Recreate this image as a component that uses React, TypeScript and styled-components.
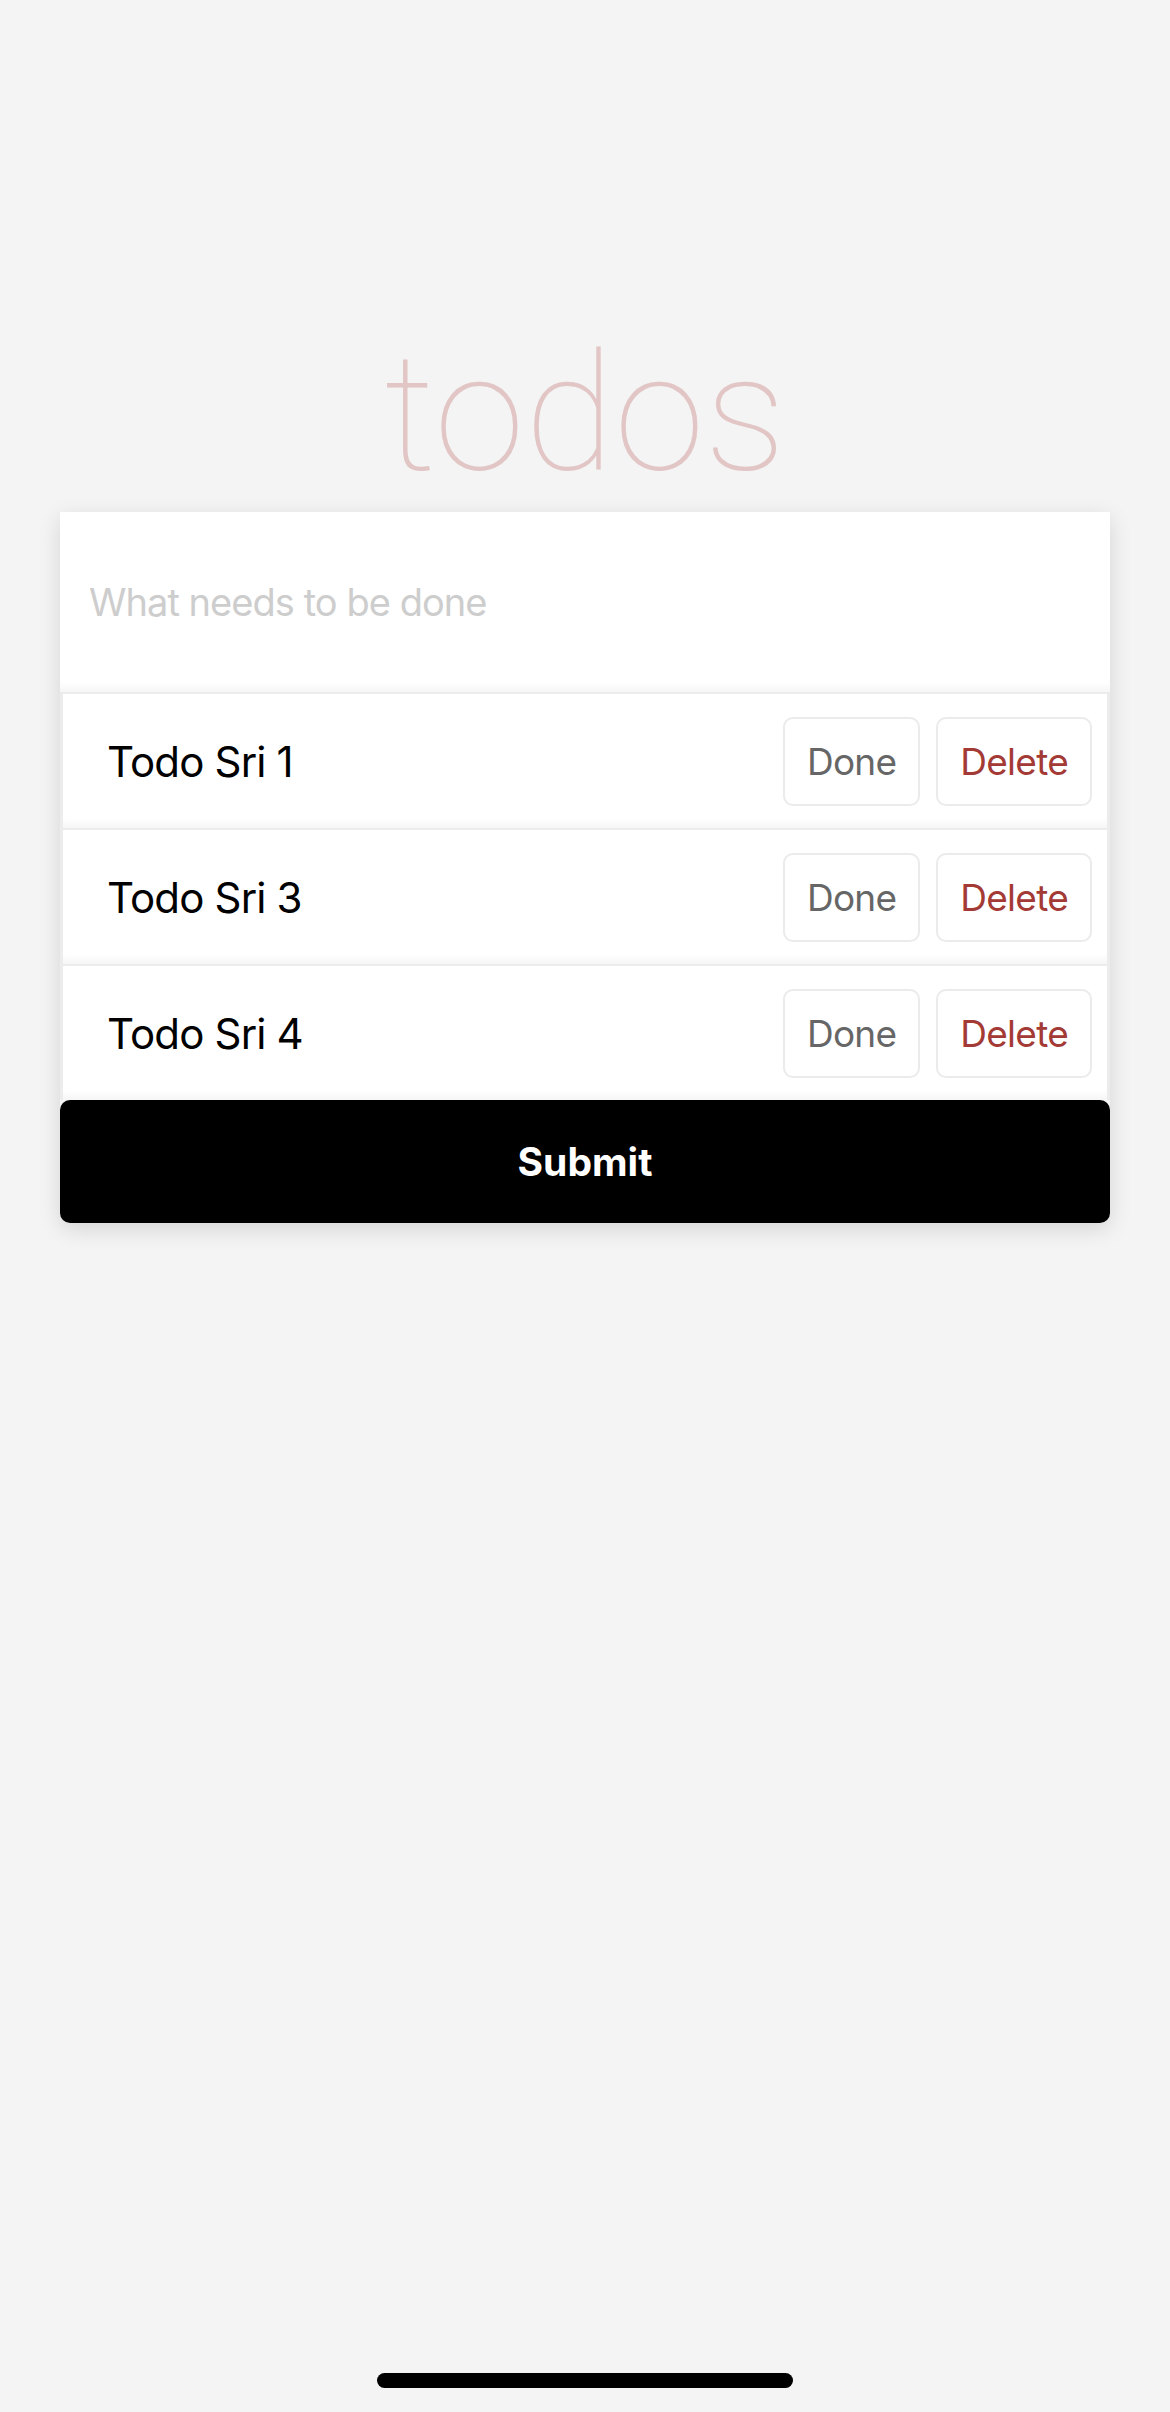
import React from "react";
import styled, { createGlobalStyle } from "styled-components";

const Global = createGlobalStyle`
  html, body { margin: 0; padding: 0; background: #f4f4f4; }
  * { box-sizing: border-box; }
`;

const Screen = styled.div`
  min-height: 2412px;
  display: flex;
  flex-direction: column;
  align-items: stretch;
  background: #f4f4f4;
  font-family: Inter, "Liberation Sans", sans-serif;
`;

const Main = styled.main`
  padding: 331px 60px 0;
  display: flex;
  flex-direction: column;
`;

const Title = styled.h1`
  margin: 0 0 17px;
  text-align: center;
  font-family: Roboto, "Liberation Sans", sans-serif;
  font-weight: 100;
  font-size: 164px;
  line-height: 164px;
  color: #e2c6c6;
`;

const Card = styled.section`
  display: flex;
  flex-direction: column;
  border-radius: 0 0 10px 10px;
  box-shadow: 0 6px 22px rgba(0, 0, 0, 0.13);
`;

const NewTodo = styled.input`
  height: 180px;
  width: 100%;
  border: none;
  outline: none;
  background: #fff;
  padding: 0 27px 0 29px;
  font-family: Inter, "Liberation Sans", sans-serif;
  font-size: 38px;
  letter-spacing: -0.025em;
  color: #111;
  box-shadow: inset 0 -14px 12px -12px rgba(0, 0, 0, 0.06);
  &::placeholder { color: #cdcdcd; }
`;

const List = styled.ul`
  list-style: none;
  margin: 0;
  padding: 2px 3px 0;
  display: flex;
  flex-direction: column;
  gap: 2px;
  background: #ececec;
`;

const Row = styled.li`
  height: 134px;
  display: flex;
  align-items: center;
  padding: 0 15px 0 44px;
  background: #fff;
  box-shadow: inset 0 -14px 12px -12px rgba(0, 0, 0, 0.06);
`;

const Label = styled.span`
  flex: 1;
  font-size: 42px;
  letter-spacing: -0.02em;
  color: #000;
`;

const Actions = styled.div`
  display: flex;
  gap: 16px;
`;

const ActionButton = styled.button<{ $danger?: boolean }>`
  height: 89px;
  padding: 0 22px;
  border: 2px solid #ebebeb;
  border-radius: 10px;
  background: #fff;
  font-family: Inter, "Liberation Sans", sans-serif;
  font-size: 37px;
  letter-spacing: -0.02em;
  color: ${(p) => (p.$danger ? "#a33a35" : "#666666")};
`;

const Submit = styled.button`
  height: 123px;
  border: none;
  border-radius: 10px;
  background: #000;
  color: #fff;
  font-family: Inter, "Liberation Sans", sans-serif;
  font-weight: 700;
  font-size: 39px;
`;

const HomeIndicator = styled.div`
  margin: auto auto 24px;
  width: 416px;
  height: 15px;
  border-radius: 8px;
  background: #000;
`;

const todos = ["Todo Sri 1", "Todo Sri 3", "Todo Sri 4"];

export default function App() {
  return (
    <Screen>
      <Global />
      <Main>
        <Title>todos</Title>
        <Card>
          <NewTodo placeholder="What needs to be done" />
          <List>
            {todos.map((t) => (
              <Row key={t}>
                <Label>{t}</Label>
                <Actions>
                  <ActionButton>Done</ActionButton>
                  <ActionButton $danger>Delete</ActionButton>
                </Actions>
              </Row>
            ))}
          </List>
          <Submit>Submit</Submit>
        </Card>
      </Main>
      <HomeIndicator />
    </Screen>
  );
}
